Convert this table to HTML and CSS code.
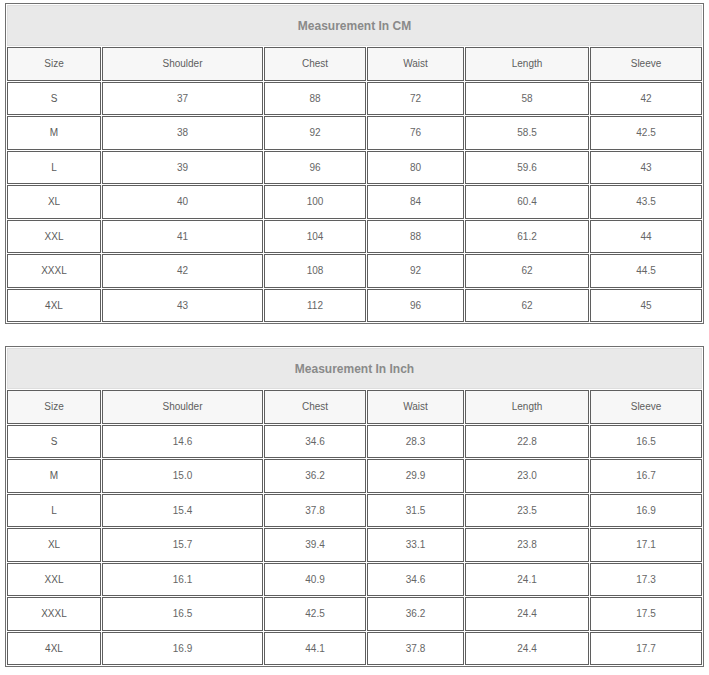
FILE: index.html
```html
<!DOCTYPE html>
<html>
<head>
<meta charset="utf-8">
<link rel="stylesheet" href="styles.css">
</head>
<body>
<div class="page">
<table class="size-table">
  <colgroup>
    <col class="c-size"><col class="c-shoulder"><col class="c-chest"><col class="c-waist"><col class="c-length"><col class="c-sleeve">
  </colgroup>
  <tr class="cap-row"><td class="caption" colspan="6">Measurement In CM</td></tr>
  <tr class="head"><th>Size</th><th>Shoulder</th><th>Chest</th><th>Waist</th><th>Length</th><th>Sleeve</th></tr>
  <tr><td class="sz">S</td><td>37</td><td>88</td><td>72</td><td>58</td><td>42</td></tr>
  <tr><td class="sz">M</td><td>38</td><td>92</td><td>76</td><td>58.5</td><td>42.5</td></tr>
  <tr><td class="sz">L</td><td>39</td><td>96</td><td>80</td><td>59.6</td><td>43</td></tr>
  <tr><td class="sz">XL</td><td>40</td><td>100</td><td>84</td><td>60.4</td><td>43.5</td></tr>
  <tr><td class="sz">XXL</td><td>41</td><td>104</td><td>88</td><td>61.2</td><td>44</td></tr>
  <tr><td class="sz">XXXL</td><td>42</td><td>108</td><td>92</td><td>62</td><td>44.5</td></tr>
  <tr><td class="sz">4XL</td><td>43</td><td>112</td><td>96</td><td>62</td><td>45</td></tr>
</table>

<table class="size-table second">
  <colgroup>
    <col class="c-size"><col class="c-shoulder"><col class="c-chest"><col class="c-waist"><col class="c-length"><col class="c-sleeve">
  </colgroup>
  <tr class="cap-row"><td class="caption" colspan="6">Measurement In Inch</td></tr>
  <tr class="head"><th>Size</th><th>Shoulder</th><th>Chest</th><th>Waist</th><th>Length</th><th>Sleeve</th></tr>
  <tr><td class="sz">S</td><td>14.6</td><td>34.6</td><td>28.3</td><td>22.8</td><td>16.5</td></tr>
  <tr><td class="sz">M</td><td>15.0</td><td>36.2</td><td>29.9</td><td>23.0</td><td>16.7</td></tr>
  <tr><td class="sz">L</td><td>15.4</td><td>37.8</td><td>31.5</td><td>23.5</td><td>16.9</td></tr>
  <tr><td class="sz">XL</td><td>15.7</td><td>39.4</td><td>33.1</td><td>23.8</td><td>17.1</td></tr>
  <tr><td class="sz">XXL</td><td>16.1</td><td>40.9</td><td>34.6</td><td>24.1</td><td>17.3</td></tr>
  <tr><td class="sz">XXXL</td><td>16.5</td><td>42.5</td><td>36.2</td><td>24.4</td><td>17.5</td></tr>
  <tr><td class="sz">4XL</td><td>16.9</td><td>44.1</td><td>37.8</td><td>24.4</td><td>17.7</td></tr>
</table>
</div>
</body>
</html>
```

FILE: styles.css
```css
html, body {
  margin: 0;
  padding: 0;
  background: #ffffff;
}

.page {
  padding: 3px 5px;
  font-family: "Liberation Sans", Arial, sans-serif;
}

.size-table {
  width: 699px;
  table-layout: fixed;
  border-collapse: separate;
  border-spacing: 1px;
  border: 1px solid #6f6f6f;
  font-size: 10px;
  color: #666666;
}

.size-table.second {
  margin-top: 22px;
}

.c-size { width: 94px; }
.c-shoulder { width: 161px; }
.c-chest { width: 102px; }
.c-waist { width: 97px; }
.c-length { width: 124px; }
.c-sleeve { width: 112px; }

.size-table td,
.size-table th {
  border: 1px solid #5f5f5f;
  padding: 0;
  text-align: center;
  vertical-align: middle;
  box-sizing: border-box;
}

.size-table tr {
  height: 33.5px;
}

.size-table .cap-row {
  height: 41px;
}

.size-table td.caption {
  background: #e9e9e9;
  border-color: #dedede;
  color: #8a8a8a;
  font-size: 12px;
  font-weight: bold;
}

.size-table .head th {
  background: #f7f7f7;
  font-weight: normal;
  color: #5e5e5e;
}

.size-table td.sz {
  color: #5a5a5a;
}
```
